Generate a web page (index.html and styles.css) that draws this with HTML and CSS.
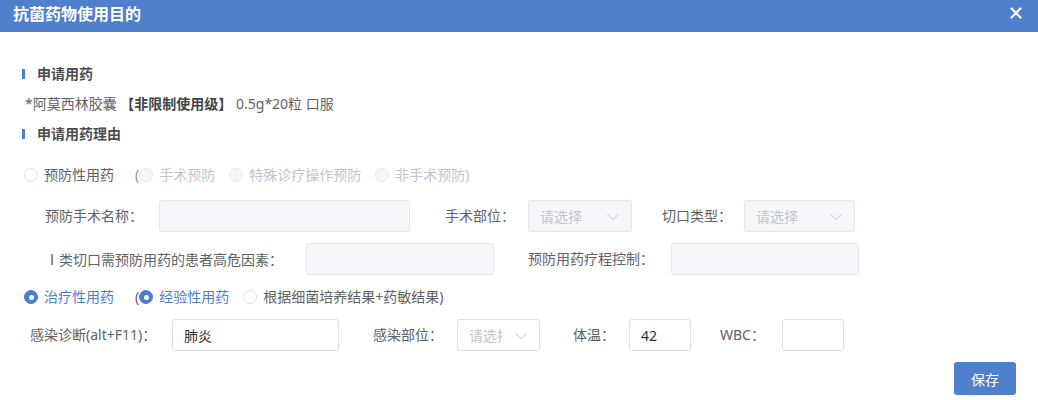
FILE: index.html
```html
<!DOCTYPE html>
<html lang="zh-CN">
<head>
<meta charset="utf-8">
<title>抗菌药物使用目的</title>
<link rel="stylesheet" href="styles.css">
</head>
<body>
<div class="dialog">
  <header class="dlg-header">
    <span class="dlg-title">抗菌药物使用目的</span>
    <svg class="dlg-close" width="12" height="12" viewBox="0 0 12 12"><path d="M1.5 1.5 L10.5 10.5 M10.5 1.5 L1.5 10.5" stroke="#fff" stroke-width="2.2" stroke-linecap="round"/></svg>
  </header>
  <div class="dlg-body">
    <div class="sec-title">申请用药</div>
    <div class="drug">*阿莫西林胶囊 <b class="drug-level">【非限制使用级】</b> 0.5g*20粒 口服</div>
    <div class="sec-title">申请用药理由</div>

    <div class="radio-row">
      <span class="radio"><span class="radio-dot"></span><span class="radio-label">预防性用药</span></span>
      <span class="paren muted">(</span>
      <span class="radio disabled"><span class="radio-dot"></span><span class="radio-label">手术预防</span></span>
      <span class="radio disabled"><span class="radio-dot"></span><span class="radio-label">特殊诊疗操作预防</span></span>
      <span class="radio disabled"><span class="radio-dot"></span><span class="radio-label">非手术预防)</span></span>
    </div>

    <div class="form-row row-a">
      <span class="lbl l-a1">预防手术名称：</span>
      <span class="input disabled w-a1"></span>
      <span class="lbl l-a2">手术部位：</span>
      <span class="select disabled w-a2"><span class="sel-text">请选择</span><svg class="chev" width="12" height="6" viewBox="0 0 12 6"><path d="M0.5 0.5 L6 5.5 L11.5 0.5" fill="none" stroke="#c0c4cc" stroke-width="1"/></svg></span>
      <span class="lbl l-a3">切口类型：</span>
      <span class="select disabled w-a3"><span class="sel-text">请选择</span><svg class="chev" width="12" height="6" viewBox="0 0 12 6"><path d="M0.5 0.5 L6 5.5 L11.5 0.5" fill="none" stroke="#c0c4cc" stroke-width="1"/></svg></span>
    </div>

    <div class="form-row row-b">
      <span class="lbl l-b1"><span class="cjk">Ⅰ</span>类切口需预防用药的患者高危因素：</span>
      <span class="input disabled w-b1"></span>
      <span class="lbl l-b2">预防用药疗程控制：</span>
      <span class="input disabled w-b2"></span>
    </div>

    <div class="radio-row row-2">
      <span class="radio checked"><span class="radio-dot"></span><span class="radio-label">治疗性用药</span></span>
      <span class="paren">(</span>
      <span class="radio checked"><span class="radio-dot"></span><span class="radio-label">经验性用药</span></span>
      <span class="radio"><span class="radio-dot"></span><span class="radio-label">根据细菌培养结果+药敏结果)</span></span>
    </div>

    <div class="form-row row-c">
      <span class="lbl l-c1">感染诊断(alt+F11)：</span>
      <span class="input w-c1">肺炎</span>
      <span class="lbl l-c2">感染部位：</span>
      <span class="select w-c2"><span class="sel-text">请选择</span><svg class="chev" width="12" height="6" viewBox="0 0 12 6"><path d="M0.5 0.5 L6 5.5 L11.5 0.5" fill="none" stroke="#c0c4cc" stroke-width="1"/></svg></span>
      <span class="lbl l-c3">体温：</span>
      <span class="input w-c3">42</span>
      <span class="lbl l-c4">WBC：</span>
      <span class="input w-c4"></span>
    </div>

    <div class="footer">
      <button class="btn-primary" type="button">保存</button>
    </div>
  </div>
</div>
</body>
</html>
```

FILE: styles.css
```css
* { box-sizing: border-box; }
html, body { margin: 0; padding: 0; background: #fff; }
body {
  font-family: "Noto Sans", "Noto Sans CJK SC", sans-serif;
  font-size: 14px;
  color: #606266;
}
.dialog { width: 1038px; height: 400px; overflow: hidden; }

.dlg-header {
  height: 32px;
  background: #4f80cc;
  display: flex;
  align-items: center;
  justify-content: space-between;
  padding: 0 16px 0 13px;
}
.dlg-title {
  color: #fff;
  font-size: 16px;
  font-weight: bold;
  line-height: 32px;
  margin-top: -4px;
}
.dlg-close { margin-top: -6px; }

.dlg-body { padding: 27px 22px 0 0; }

.sec-title {
  position: relative;
  height: 30px;
  line-height: 30px;
  padding-left: 37px;
  font-weight: bold;
  color: #4d4d4d;
}
.sec-title::before {
  content: "";
  position: absolute;
  left: 22px;
  top: 10px;
  width: 3px;
  height: 10px;
  background: #4f80cc;
}
.drug {
  height: 30px;
  line-height: 30px;
  padding-left: 25px;
  color: #606266;
}
.drug-level { color: #444; font-weight: bold; }

.radio-row {
  display: flex;
  align-items: center;
  height: 30px;
  margin-top: 11px;
  padding-left: 24px;
}
.row-2 { margin-top: 7px; }
.radio { display: inline-flex; align-items: center; margin-right: 14px; }
.radio-dot {
  width: 14px;
  height: 14px;
  border-radius: 50%;
  border: 1px solid #dcdfe6;
  background: #fff;
  position: relative;
  flex: none;
}
.radio-label { margin-left: 6px; line-height: 20px; }
.radio.disabled .radio-dot { background: #f5f7fa; border-color: #e4e7ed; }
.radio.disabled .radio-label { color: #c0c4cc; }
.radio.checked .radio-dot { background: #4a7fd0; border-color: #4a7fd0; }
.radio.checked .radio-dot::after {
  content: "";
  position: absolute;
  left: 50%;
  top: 50%;
  width: 5px;
  height: 5px;
  margin: -2.5px 0 0 -2.5px;
  border-radius: 50%;
  background: #fff;
}
.radio.checked .radio-label { color: #4a7fd0; }
.paren { margin-left: 7px; line-height: 20px; color: #606266; }
.paren.muted { color: #909399; }

.form-row {
  display: flex;
  align-items: center;
  height: 32px;
}
.row-a { margin-top: 10px; padding-left: 45px; }
.row-b { margin-top: 11px; padding-left: 45px; }
.row-c { margin-top: 7px; padding-left: 30px; }

.lbl { white-space: nowrap; flex: none; line-height: 20px; }
.cjk { font-family: "Noto Sans CJK SC", sans-serif; }
.l-a1 { width: 114px; }
.l-a2 { width: 118px; padding-left: 35px; }
.l-a3 { width: 112px; padding-left: 30px; }
.l-b1 { width: 261px; padding-left: 0; }
.l-b2 { width: 177px; padding-left: 34px; }
.l-c1 { width: 142px; }
.l-c2 { width: 118px; padding-left: 34px; }
.l-c3 { width: 89px; padding-left: 33px; }
.l-c4 { width: 91px; padding-left: 29px; }

.input, .select {
  flex: none;
  height: 32px;
  border: 1px solid #dcdfe6;
  border-radius: 3px;
  background: #fff;
  display: flex;
  align-items: center;
  padding: 0 11px;
  color: #303133;
}
.input.disabled, .select.disabled { background: #f5f7fa; border-color: #e4e7ed; }
.select { position: relative; padding-right: 37px; }
.sel-text { color: #c0c4cc; white-space: nowrap; overflow: hidden; }
.chev { position: absolute; right: 12px; top: 13px; }

.w-a1 { width: 251px; }
.w-a2 { width: 104px; }
.w-a3 { width: 111px; }
.w-b1 { width: 188px; }
.w-b2 { width: 188px; }
.w-c1 { width: 167px; }
.w-c2 { width: 83px; }
.w-c3 { width: 62px; }
.w-c4 { width: 62px; }

.footer { display: flex; justify-content: flex-end; margin-top: 11px; }
.btn-primary {
  width: 62px;
  height: 33px;
  border: none;
  border-radius: 3px;
  background: #4f80cc;
  color: #fff;
  font-family: inherit;
  font-size: 14px;
  padding: 0;
}
```
